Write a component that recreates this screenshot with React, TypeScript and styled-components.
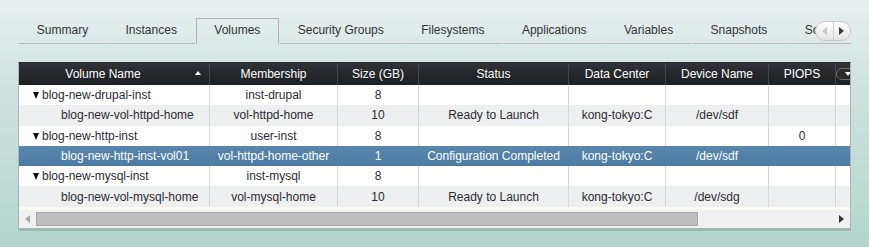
import React from 'react';
import styled, { createGlobalStyle, css } from 'styled-components';

interface VolumeRow {
  name: string;
  parent?: boolean;
  membership: string;
  size: string;
  status?: string;
  dataCenter?: string;
  device?: string;
  piops?: string;
  selected?: boolean;
}

const tabs = [
  'Summary',
  'Instances',
  'Volumes',
  'Security Groups',
  'Filesystems',
  'Applications',
  'Variables',
  'Snapshots',
  'Scripts',
];

const columns = ['Volume Name', 'Membership', 'Size (GB)', 'Status', 'Data Center', 'Device Name', 'PIOPS', ''];

const rows: VolumeRow[] = [
  { name: 'blog-new-drupal-inst', parent: true, membership: 'inst-drupal', size: '8' },
  {
    name: 'blog-new-vol-httpd-home',
    membership: 'vol-httpd-home',
    size: '10',
    status: 'Ready to Launch',
    dataCenter: 'kong-tokyo:C',
    device: '/dev/sdf',
  },
  { name: 'blog-new-http-inst', parent: true, membership: 'user-inst', size: '8', piops: '0' },
  {
    name: 'blog-new-http-inst-vol01',
    membership: 'vol-httpd-home-other',
    size: '1',
    status: 'Configuration Completed',
    dataCenter: 'kong-tokyo:C',
    device: '/dev/sdf',
    selected: true,
  },
  { name: 'blog-new-mysql-inst', parent: true, membership: 'inst-mysql', size: '8' },
  {
    name: 'blog-new-vol-mysql-home',
    membership: 'vol-mysql-home',
    size: '10',
    status: 'Ready to Launch',
    dataCenter: 'kong-tokyo:C',
    device: '/dev/sdg',
  },
];

const GlobalStyle = createGlobalStyle`
  html, body {
    margin: 0;
    padding: 0;
  }

  body {
    width: 869px;
    height: 247px;
    overflow: hidden;
    background: linear-gradient(180deg, #eaf0f2 0%, #d3e4e2 28%, #b3d5ce 100%);
    font-family: 'Liberation Sans', Arial, sans-serif;
    font-size: 12px;
    color: #333;
  }
`;

const Page = styled.div`
  box-sizing: border-box;
  width: 869px;
  height: 247px;
  padding: 18px 18px 0 18px;
`;

const TabStrip = styled.div`
  position: relative;
  display: flex;
  height: 26px;
  overflow: hidden;
`;

const Tab = styled.div<{ $active?: boolean }>`
  box-sizing: border-box;
  flex: none;
  height: 26px;
  padding: 0 17.6px 0 17.8px;
  line-height: 23px;
  color: #333;
  white-space: nowrap;
  border: 1px solid transparent;
  border-bottom: 1px solid #bdbdbd;

  ${({ $active }) =>
    $active &&
    css`
      border-color: #b4b4b4;
      border-bottom-color: transparent;
    `}
`;

const TabFiller = styled.div`
  flex: 1;
  border-bottom: 1px solid #bdbdbd;
`;

const TabScroller = styled.div`
  position: absolute;
  top: 3px;
  right: 0;
  display: flex;
  width: 36px;
  height: 20px;
  box-sizing: border-box;
  border: 1px solid #c6c6c6;
  border-radius: 10px;
  background: linear-gradient(180deg, #ffffff 0%, #f1f1f1 55%, #e2e2e2 100%);
  overflow: hidden;
`;

const ScrollHalf = styled.div<{ $divider?: boolean }>`
  flex: 1;
  display: flex;
  align-items: center;
  justify-content: center;
  ${({ $divider }) => $divider && 'border-right: 1px solid #cfcfcf;'}
`;

const Arrow = styled.span<{ $dir: 'left' | 'right' | 'down' | 'up'; $color: string; $size?: number }>`
  display: inline-block;
  width: 0;
  height: 0;
  ${({ $dir, $color, $size = 4 }) => {
    if ($dir === 'left')
      return css`
        border-top: ${$size}px solid transparent;
        border-bottom: ${$size}px solid transparent;
        border-right: ${$size + 1}px solid ${$color};
      `;
    if ($dir === 'right')
      return css`
        border-top: ${$size}px solid transparent;
        border-bottom: ${$size}px solid transparent;
        border-left: ${$size + 1}px solid ${$color};
      `;
    if ($dir === 'up')
      return css`
        border-left: ${$size}px solid transparent;
        border-right: ${$size}px solid transparent;
        border-bottom: ${$size + 1}px solid ${$color};
      `;
    return css`
      border-left: ${$size}px solid transparent;
      border-right: ${$size}px solid transparent;
      border-top: ${$size + 1}px solid ${$color};
    `;
  }}
`;

const Panel = styled.div`
  box-sizing: border-box;
  width: 833px;
  margin-top: 18px;
  border: 1px solid #a9b6b5;
  border-top-color: #2a2d30;
  background: #fbfbef;
  box-shadow: 0 2px 0 #9db7b1;
  overflow: hidden;
`;

const GRID = '191px 128px 81px 150px 97px 103px 67px 40px';

const HeaderRow = styled.div`
  display: grid;
  grid-template-columns: ${GRID};
  height: 22px;
  background: linear-gradient(180deg, #30343a 0%, #24272b 50%, #1d2023 100%);
`;

const HeaderCell = styled.div`
  box-sizing: border-box;
  display: flex;
  align-items: center;
  justify-content: center;
  color: #fff;
  white-space: nowrap;
  border-right: 1px solid #44484c;

  &:last-child {
    border-right: none;
    justify-content: flex-start;
  }
`;

const HeaderLabel = styled.span`
  flex: 1;
  text-align: center;
`;

const SortSlot = styled.span`
  flex: none;
  width: 22px;
  display: flex;
  justify-content: center;
  padding-bottom: 2px;
`;

const MenuButton = styled.span`
  display: flex;
  align-items: center;
  justify-content: center;
  width: 22px;
  height: 10px;
  border: 1px solid #6a6a6a;
  border-radius: 6px;
  background: #2a2a2a;
`;

const BodyRow = styled.div<{ $alt?: boolean; $selected?: boolean }>`
  display: grid;
  grid-template-columns: ${GRID};
  height: 20.3px;
  background: ${({ $alt }) => ($alt ? '#eeeff0' : '#ffffff')};
  color: #2b2b33;

  ${({ $selected }) =>
    $selected &&
    css`
      background: linear-gradient(180deg, #5886ad 0%, #4c7aa3 100%);
      color: #fff;
    `}
`;

const Cell = styled.div<{ $selected?: boolean; $indent?: number; $left?: boolean }>`
  box-sizing: border-box;
  display: flex;
  align-items: center;
  justify-content: ${({ $left }) => ($left ? 'flex-start' : 'center')};
  padding-left: ${({ $indent = 0 }) => $indent}px;
  white-space: nowrap;
  overflow: hidden;
  border-right: 1px solid ${({ $selected }) => ($selected ? 'transparent' : '#d6d6d6')};
`;

const Expander = styled.span`
  display: inline-block;
  width: 0;
  height: 0;
  margin: 1px 3px 0 0;
  border-left: 3.5px solid transparent;
  border-right: 3.5px solid transparent;
  border-top: 7px solid #111;
`;

const BodyFiller = styled.div`
  height: 3px;
  background: #fbfbef;
`;

const HScrollbar = styled.div`
  display: flex;
  align-items: center;
  height: 18px;
  background: #f0f0f0;
`;

const ScrollArrowBox = styled.div`
  flex: none;
  width: 17px;
  display: flex;
  justify-content: center;
`;

const ScrollTrack = styled.div`
  flex: 1;
  display: flex;
  align-items: center;
  height: 100%;
`;

const ScrollThumb = styled.div`
  box-sizing: border-box;
  height: 14px;
  border: 1px solid #a6a6a6;
  background: #bdbdbd;
`;

const App: React.FC = () => (
  <>
    <GlobalStyle />
    <Page>
      <TabStrip>
        {tabs.map((t) => (
          <Tab key={t} $active={t === 'Volumes'}>
            {t}
          </Tab>
        ))}
        <TabFiller />
        <TabScroller>
          <ScrollHalf $divider>
            <Arrow $dir="left" $color="#c9c9c9" />
          </ScrollHalf>
          <ScrollHalf>
            <Arrow $dir="right" $color="#3a3a3a" />
          </ScrollHalf>
        </TabScroller>
      </TabStrip>

      <Panel>
        <HeaderRow>
          {columns.map((c, i) => (
            <HeaderCell key={i}>
              {i === 0 ? (
                <>
                  <HeaderLabel>{c}</HeaderLabel>
                  <SortSlot>
                    <Arrow $dir="up" $color="#fff" $size={3} />
                  </SortSlot>
                </>
              ) : i === columns.length - 1 ? (
                <MenuButton>
                  <Arrow $dir="down" $color="#fff" $size={3} />
                </MenuButton>
              ) : (
                c
              )}
            </HeaderCell>
          ))}
        </HeaderRow>

        {rows.map((r, i) => (
          <BodyRow key={r.name} $alt={i % 2 === 1} $selected={r.selected}>
            <Cell $left $indent={r.parent ? 14 : 42} $selected={r.selected}>
              {r.parent && <Expander />}
              {r.name}
            </Cell>
            <Cell $selected={r.selected}>{r.membership}</Cell>
            <Cell $selected={r.selected}>{r.size}</Cell>
            <Cell $selected={r.selected}>{r.status}</Cell>
            <Cell $selected={r.selected}>{r.dataCenter}</Cell>
            <Cell $selected={r.selected}>{r.device}</Cell>
            <Cell $selected={r.selected}>{r.piops}</Cell>
            <Cell $selected={r.selected} />
          </BodyRow>
        ))}

        <BodyFiller />
        <HScrollbar>
          <ScrollArrowBox>
            <Arrow $dir="left" $color="#a8a8a8" $size={4} />
          </ScrollArrowBox>
          <ScrollTrack>
            <ScrollThumb style={{ width: '662px' }} />
          </ScrollTrack>
          <ScrollArrowBox>
            <Arrow $dir="right" $color="#333" $size={4} />
          </ScrollArrowBox>
        </HScrollbar>
      </Panel>
    </Page>
  </>
);

export default App;
